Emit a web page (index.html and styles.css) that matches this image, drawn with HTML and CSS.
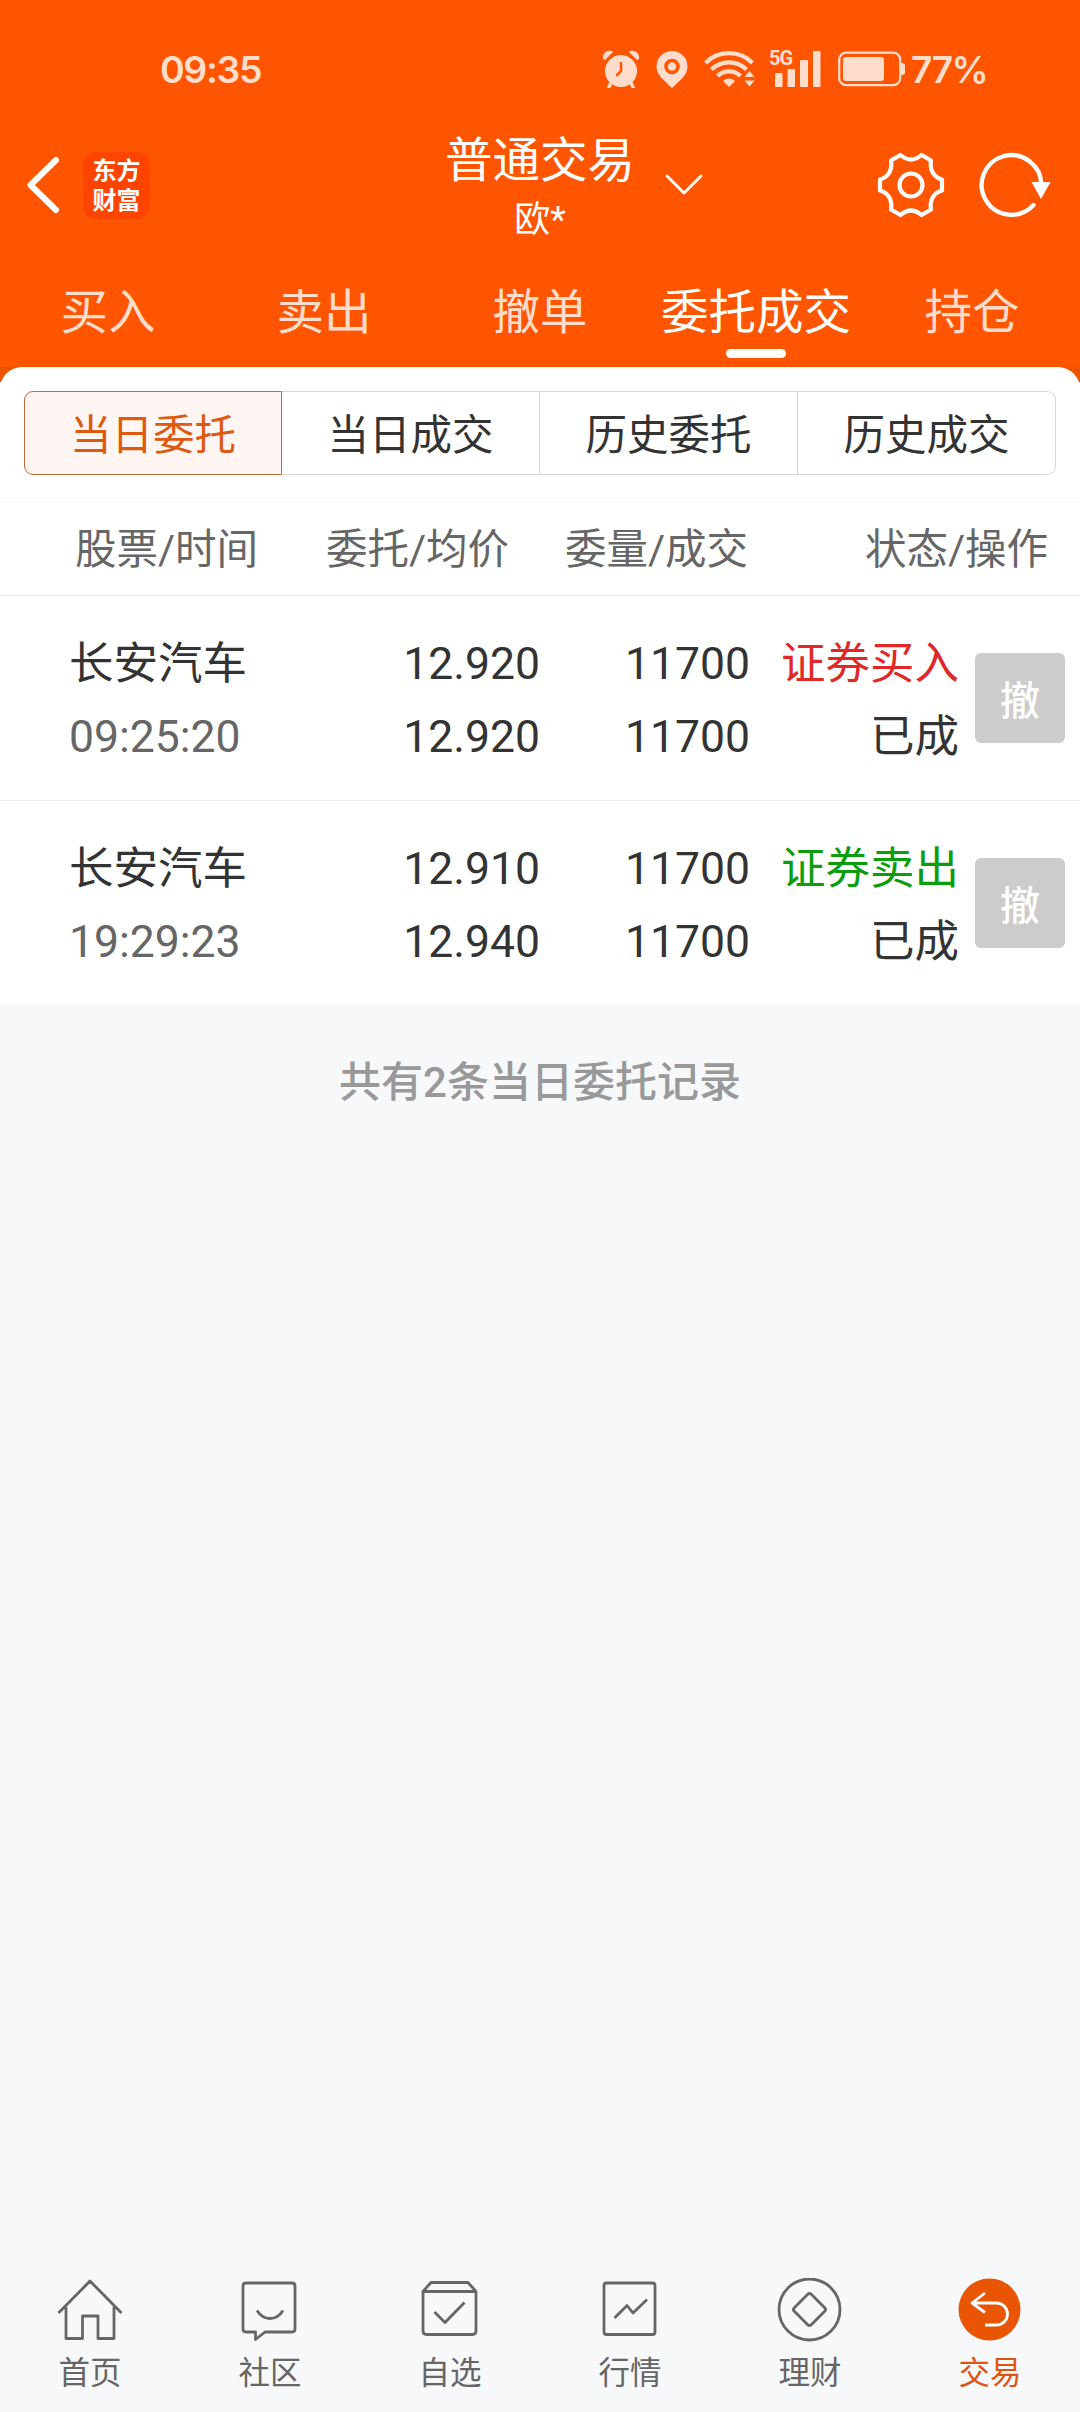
FILE: index.html
```html
<!DOCTYPE html>
<html lang="zh-CN">
<head>
    <meta charset="UTF-8">
    <meta name="viewport" content="width=device-width, initial-scale=1.0">
    <title>普通交易</title>
    <link rel="stylesheet" href="styles.css">
</head>
<body>
    <div class="app">
        <header class="header">
            <!-- Status bar -->
            <div class="status-bar">
                <span class="clock">09:35</span>
                <div class="status-icons">
                    <svg class="alarm" width="38" height="38" viewBox="0 0 38 38">
                        <path d="M1 9a7 7 0 0 1 9-8l1 1-8 8zM37 9a7 7 0 0 0-9-8l-1 1 8 8z" fill="currentColor"/>
                        <circle cx="19" cy="21" r="16" fill="currentColor"/>
                        <path d="M9 33l-2 4M29 33l2 4" stroke="currentColor" stroke-width="3.5" stroke-linecap="round"/>
                        <path d="M19 13v8l-4 4" fill="none" stroke="#ff5500" stroke-width="2.5" stroke-linecap="round"/>
                    </svg>
                    <svg class="pin" width="32" height="38" viewBox="0 0 32 38">
                        <path d="M16 1a15.500 15.500 0 0 0-15.500 15.500c0 5 2.500 9 5.500 12l10 9.500 10-9.500c3-3 5.500-7 5.500-12A15.500 15.500 0 0 0 16 1z" fill="currentColor"/>
                        <circle cx="16" cy="16.500" r="6" fill="none" stroke="#ff5500" stroke-width="3.500"/>
                    </svg>
                    <svg class="wifi" width="52" height="38" viewBox="0 0 52 38">
                        <g fill="none" stroke="currentColor" stroke-width="4.200">
                            <path d="M1.500 13a33 33 0 0 1 47 0"/>
                            <path d="M7.500 19.500a25 25 0 0 1 35 0"/>
                            <path d="M13.500 26a16.500 16.500 0 0 1 23 0"/>
                        </g>
                        <path d="M19 31a8.500 8.500 0 0 1 12 0l-6 6zM40.500 27l5-6 5 6zM40.500 30.500l5 6 5-6z" fill="currentColor"/>
                    </svg>
                    <div class="signal">
                        <span class="network">5G</span>
                        <svg width="46" height="38" viewBox="0 0 46 38" fill="currentColor">
                            <rect x="0" y="23" width="7.500" height="14" rx="1"/>
                            <rect x="12.500" y="19" width="7.500" height="18" rx="1"/>
                            <rect x="25" y="10" width="8" height="27" rx="1"/>
                            <rect x="38" y="1" width="7.500" height="36" rx="1"/>
                        </svg>
                    </div>
                    <svg class="battery" width="68" height="36" viewBox="0 0 68 36">
                        <rect x="1.200" y="1.700" width="61" height="32.500" rx="7" fill="none" stroke="currentColor" stroke-width="2.200"/>
                        <rect x="5" y="6" width="41" height="24" rx="3" fill="currentColor"/>
                        <path d="M63 12h1.500q2.500 0 2.500 3v6q0 3-2.500 3H63z" fill="currentColor"/>
                    </svg>
                    <span class="percent">77%</span>
                </div>
            </div>

            <!-- Title bar -->
            <div class="title-bar">
                <div class="title-left">
                    <svg width="34" height="58" viewBox="0 0 34 58">
                        <path d="M30 4L4.500 29l25.500 25" fill="none" stroke="#fff" stroke-width="6" stroke-linecap="round" stroke-linejoin="round"/>
                    </svg>
                    <div class="logo">东方<br>财富</div>
                </div>
                <div class="titles">
                    <div class="title">普通交易</div>
                    <div class="subtitle">欧*</div>
                </div>
                <div class="title-right">
                    <svg class="arrow-down" width="38" height="22" viewBox="0 0 38 22">
                        <path d="M2 2l17 17L36 2" fill="none" stroke="#fff" stroke-width="2.800" stroke-linecap="round" stroke-linejoin="round"/>
                    </svg>
                    <svg class="gear" width="68" height="68" viewBox="0 0 68 68" fill="none" stroke="#fff" stroke-width="4.200">
                        <path d="M23.500 4Q34 13 44.500 4L54 9.500C52.500 18 56 26 65 28.500V39.500C56 42 52.500 50 54 58.500L44.500 64Q34 55 23.500 64L14 58.500C15.500 50 12 42 3 39.500V28.500C12 26 15.500 18 14 9.500Z" stroke-linejoin="round"/>
                        <circle cx="34" cy="34" r="11.500"/>
                    </svg>
                    <svg class="refresh" width="74" height="68" viewBox="0 0 74 68">
                        <path d="M55.500 54A29.800 29.800 0 1 1 63.300 34" fill="none" stroke="#fff" stroke-width="4.300" stroke-linecap="round"/>
                        <path d="M53.500 31h19l-9.500 17z" fill="#fff"/>
                    </svg>
                </div>
            </div>

            <nav class="tabs">
                <a class="tab">买入</a>
                <a class="tab">卖出</a>
                <a class="tab">撤单</a>
                <a class="tab active">委托成交</a>
                <a class="tab">持仓</a>
            </nav>
        </header>

        <div class="panel-wrap">
            <main class="panel">
                <div class="segments">
                    <div class="segment active">当日委托</div>
                    <div class="segment">当日成交</div>
                    <div class="segment">历史委托</div>
                    <div class="segment">历史成交</div>
                </div>

                <div class="list-head">
                    <span>股票/时间</span>
                    <span>委托/均价</span>
                    <span>委量/成交</span>
                    <span>状态/操作</span>
                </div>

                <!-- Orders -->
                <div class="order">
                    <div class="cell name">长安汽车<br><span class="time">09:25:20</span></div>
                    <div class="cell">12.920<br>12.920</div>
                    <div class="cell">11700<br>11700</div>
                    <div class="cell"><span class="buy">证券买入</span><br>已成</div>
                    <button class="cancel" type="button">撤</button>
                </div>
                <div class="order">
                    <div class="cell name">长安汽车<br><span class="time">19:29:23</span></div>
                    <div class="cell">12.910<br>12.940</div>
                    <div class="cell">11700<br>11700</div>
                    <div class="cell"><span class="sell">证券卖出</span><br>已成</div>
                    <button class="cancel" type="button">撤</button>
                </div>
            </main>
        </div>

        <p class="summary">共有2条当日委托记录</p>

        <!-- Bottom navigation -->
        <nav class="bottom-nav">
            <a class="nav-item">
                <svg width="66" height="66" viewBox="0 0 66 66">
                    <path d="M1.500 35L33 3l31.500 32M9 29v31.500h16.500V38h15.500v22.500H57V29"/>
                </svg>
                <span>首页</span>
            </a>
            <a class="nav-item">
                <svg width="66" height="66" viewBox="0 0 66 66">
                    <path d="M9 5h46q3 0 3 3v43q0 3-3 3H28l-9.500 7.500V54H9q-3 0-3-3V8q0-3 3-3zM20 32.500q5 8 13 8t13-8"/>
                </svg>
                <span>社区</span>
            </a>
            <a class="nav-item">
                <svg width="66" height="66" viewBox="0 0 66 66">
                    <path d="M6 13.500L14 4.500h37l8 9V53q0 3.500-3.500 3.500H9.500Q6 56.500 6 53zM6 13.500h53M17.500 34L28 44.500 47.500 24.500"/>
                </svg>
                <span>自选</span>
            </a>
            <a class="nav-item">
                <svg width="66" height="66" viewBox="0 0 66 66">
                    <rect x="7" y="5" width="51" height="51.500" rx="2.500"/>
                    <path d="M17.500 40L30 27.500l6 7.500L50 21.500"/>
                </svg>
                <span>行情</span>
            </a>
            <a class="nav-item">
                <svg width="66" height="66" viewBox="0 0 66 66">
                    <circle cx="32.500" cy="31.500" r="30.500"/>
                    <rect x="20.500" y="19.500" width="24" height="24" rx="2.500" transform="rotate(45 32.500 31.500)"/>
                </svg>
                <span>理财</span>
            </a>
            <a class="nav-item active">
                <svg width="66" height="66" viewBox="0 0 66 66">
                    <circle cx="32.500" cy="31.500" r="31" fill="#ea5504" stroke="none"/>
                    <path d="M28 15L15 25l13 9.500M15.500 25h24a11 11 0 0 1 0 22H28" stroke="#fff"/>
                </svg>
                <span>交易</span>
            </a>
        </nav>
    </div>
</body>
</html>
```
FILE: styles.css
```css
* {
    box-sizing: border-box;
}
body {
    margin: 0;
    font-family: Roboto, "Noto Sans CJK SC", sans-serif;
    background: #f7f8fa;
    color: #333;
}
svg {
    display: block;
    flex: none;
}
.app {
    width: 1080px;
    height: 2412px;
    display: flex;
    flex-direction: column;
    overflow: hidden;
}
.header {
    background: #ff5500;
    color: #fff;
}

/* Status bar */
.status-bar {
    height: 130px;
    padding: 8px 93px 0 160px;
    display: flex;
    align-items: center;
    justify-content: space-between;
    color: #ffddcc;
    font-family: Inter, sans-serif;
    font-weight: 600;
}
.clock {
    font-size: 37.5px;
    letter-spacing: -1.4px;
}
.status-icons {
    display: flex;
    align-items: center;
}
.pin {
    margin-left: 16px;
}
.wifi {
    margin-left: 16px;
}
.signal {
    display: flex;
    align-items: flex-start;
    margin-left: 13px;
}
.network {
    width: 6px;
    font-family: Roboto, sans-serif;
    font-size: 20px;
    font-weight: 700;
    line-height: 17px;
    letter-spacing: -1px;
    white-space: nowrap;
}
.battery {
    margin-left: 17px;
}
.percent {
    margin-left: 5px;
    width: 76px;
    font-size: 37px;
    letter-spacing: -1.4px;
    white-space: nowrap;
}

/* Title bar */
.title-bar {
    height: 118px;
    display: grid;
    grid-template-columns: 1fr 200px 1fr;
}
.title-left,
.title-right {
    display: flex;
    align-items: center;
    padding-bottom: 9px;
}
.title-left {
    padding-left: 26px;
}
.logo {
    width: 67px;
    height: 67px;
    margin-left: 23px;
    padding-top: 2px;
    border-radius: 13px;
    background: #ff4400;
    font-family: "Noto Sans CJK SC", sans-serif;
    font-size: 24px;
    font-weight: 700;
    line-height: 30px;
    text-align: center;
}
.titles {
    padding-top: 1px;
    text-align: center;
}
.title {
    font-size: 47.5px;
    line-height: 60px;
    margin: 0 -5px;
}
.subtitle {
    font-size: 36px;
    line-height: 58px;
}
.arrow-down {
    margin-left: 25px;
}
.gear {
    margin-left: 173.5px;
}
.refresh {
    margin-left: 33px;
}

/* Trade tabs */
.tabs {
    height: 119px;
    padding-top: 35px;
    display: grid;
    grid-template-columns: repeat(5, 1fr);
}
.tab {
    display: flex;
    flex-direction: column;
    align-items: center;
    gap: 6px;
    font-size: 47.5px;
    line-height: 60px;
    color: #ffddcc;
}
.tab.active {
    color: #fff;
}
.tab.active::after {
    content: "";
    width: 60px;
    height: 9px;
    border-radius: 5px;
    background: #fff;
}

/* Orders panel */
.panel-wrap {
    background: linear-gradient(#ea5504 15px, #fff 15px);
}
.panel {
    background: #fff;
    border-radius: 22px 22px 0 0;
}
.segments {
    display: grid;
    grid-template-columns: repeat(4, 258px);
    padding: 24px 24px 23px;
}
.segment {
    height: 84px;
    border: 1px solid #d3d7d7;
    border-left: none;
    font-size: 41.5px;
    line-height: 87px;
    text-align: center;
}
.segment:last-child {
    border-radius: 0 9px 9px 0;
}
.segment.active {
    border: 1px solid #c0693a;
    border-radius: 9px 0 0 9px;
    background: #fff6f3;
    color: #dd5a10;
}
.list-head {
    height: 98px;
    padding: 0 32px 2px 75px;
    display: grid;
    grid-template-columns: 251px 239px 1fr auto;
    align-items: center;
    border-top: 1px solid #f5f5f5;
    border-bottom: 1px solid #ececec;
    color: #666;
    font-size: 41.5px;
    white-space: nowrap;
}
.order {
    height: 205px;
    padding: 0 15px 0 69px;
    display: grid;
    grid-template-columns: 220px 251px 210px 209px 90px;
    justify-content: start;
    align-items: center;
    border-bottom: 1px solid #ececec;
    font-size: 44.5px;
    line-height: 73px;
}
.order:last-child {
    height: 204px;
    border-bottom: none;
}
.cell {
    padding-top: 5px;
    text-align: right;
    white-space: nowrap;
}
.cell.name {
    text-align: left;
}
.time {
    color: #666;
}
.buy {
    color: #e02828;
}
.sell {
    color: #0b9d0b;
}
.cancel {
    width: 90px;
    height: 90px;
    margin-left: 16px;
    padding: 0;
    border: none;
    border-radius: 6px;
    background: #ccc;
    color: #fff;
    font-family: inherit;
    font-size: 40px;
    font-weight: 500;
}
.summary {
    margin: 48px 0 0;
    text-align: center;
    font-size: 42px;
    font-weight: 500;
    line-height: 60px;
    color: #999;
}

/* Bottom navigation */
.bottom-nav {
    height: 134px;
    margin-top: auto;
    display: grid;
    grid-template-columns: repeat(6, 1fr);
}
.nav-item {
    display: flex;
    flex-direction: column;
    align-items: center;
    font-size: 31.5px;
    line-height: 60px;
    color: #666;
}
.nav-item svg {
    fill: none;
    stroke: #666;
    stroke-width: 2.8;
    stroke-linejoin: round;
}
.nav-item.active {
    color: #dd5510;
}
```
